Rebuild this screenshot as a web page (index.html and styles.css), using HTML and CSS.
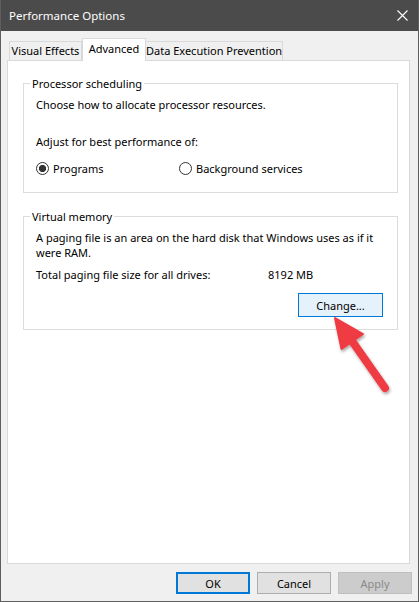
FILE: index.html
```html
<!DOCTYPE html>
<html lang="en">
<head>
<meta charset="utf-8">
<title>Performance Options</title>
<link rel="stylesheet" href="styles.css">
</head>
<body>
<div class="window">
  <div class="titlebar">
    <span class="title">Performance Options</span>
    <span class="close">
      <svg width="11" height="11" viewBox="0 0 11 11"><path d="M0.5 0.5 L10.5 10.5 M10.5 0.5 L0.5 10.5" stroke="#ffffff" stroke-width="1.1" fill="none"/></svg>
    </span>
  </div>
  <div class="body">
    <div class="tabs">
      <div class="tab tab-visual">Visual Effects</div>
      <div class="tab tab-adv active">Advanced</div>
      <div class="tab tab-dep">Data Execution Prevention</div>
    </div>
    <div class="panel">
      <fieldset class="group group-cpu">
        <legend>Processor scheduling</legend>
        <p class="line first">Choose how to allocate processor resources.</p>
        <p class="line adjust">Adjust for best performance of:</p>
        <div class="radios">
          <div class="radio"><span class="dot checked"></span>Programs</div>
          <div class="radio"><span class="dot"></span>Background services</div>
        </div>
      </fieldset>
      <fieldset class="group group-vm">
        <legend>Virtual memory</legend>
        <p class="line first nowrap">A paging file is an area on the hard disk that Windows uses as if it<br>were RAM.</p>
        <div class="total">
          <span>Total paging file size for all drives:</span>
          <span>8192 MB</span>
        </div>
        <div class="change-row">
          <div class="btn change">Change...</div>
        </div>
      </fieldset>
    </div>
    <div class="buttons">
      <div class="btn default">OK</div>
      <div class="btn">Cancel</div>
      <div class="btn disabled">Apply</div>
    </div>
  </div>
  <svg class="arrow" width="419" height="602" viewBox="0 0 419 602">
    <defs>
      <filter id="sh" x="-20%" y="-20%" width="140%" height="140%">
        <feDropShadow dx="1" dy="2" stdDeviation="1.5" flood-color="#000" flood-opacity="0.35"/>
      </filter>
    </defs>
    <g filter="url(#sh)" fill="#ef3a43" stroke="#ef3a43">
      <line x1="352" y1="341" x2="385" y2="388" stroke-width="8" stroke-linecap="round"/>
      <polygon points="335,318 363,334 341.5,349" stroke-width="2" stroke-linejoin="round"/>
    </g>
  </svg>
</div>
</body>
</html>
```

FILE: styles.css
```css
html, body {
  margin: 0;
  padding: 0;
  background: #ffffff;
}

.window {
  position: relative;
  width: 419px;
  height: 602px;
  box-sizing: border-box;
  background: #f0f0f0;
  border: 1px solid #5e5e5e;
  border-top: none;
  display: flex;
  flex-direction: column;
  font-family: "Noto Sans", "Open Sans", sans-serif;
  font-size: 11px;
  color: #000000;
}

.titlebar {
  height: 31px;
  flex: none;
  background: #4b4b4b;
  color: #ffffff;
  display: flex;
  align-items: center;
  padding-left: 8px;
  font-size: 11.5px;
}

.close {
  margin-left: auto;
  margin-right: 10px;
  display: flex;
}

.body {
  flex: 1;
  display: flex;
  flex-direction: column;
  padding: 7px 8px 0 6px;
}

.tabs {
  display: flex;
  height: 22px;
  padding-left: 2px;
  flex: none;
}

.tab {
  box-sizing: border-box;
  height: 19px;
  margin-top: 3px;
  border: 1px solid #d9d9d9;
  border-bottom: none;
  background: #f0f0f0;
  text-align: center;
  line-height: 18px;
  white-space: nowrap;
}

.tab + .tab {
  border-left: none;
}

.tab-visual { width: 73px; }
.tab-adv { width: 64px; }
.tab-dep { width: 137px; }

.tab.active {
  position: relative;
  z-index: 1;
  margin-top: 0;
  height: 23px;
  margin-bottom: -1px;
  background: #ffffff;
  border-left: 1px solid #d9d9d9;
  line-height: 19px;
}

.tab.active + .tab {
  border-left: none;
}

.panel {
  box-sizing: border-box;
  height: 504px;
  flex: none;
  border: 1px solid #d9d9d9;
  background: #ffffff;
  padding: 15px 11px 0 15px;
}

.group {
  margin: 0;
  border: 1px solid #dcdcdc;
  padding: 0 13px 16px 12px;
  min-width: 0;
}

.group legend {
  padding: 0 2px;
  margin-left: -6px;
  line-height: 15px;
}

.line {
  margin: 0;
  line-height: 15px;
}

.nowrap {
  white-space: nowrap;
}

.line.first {
  margin-top: 6px;
}

.line.adjust {
  margin-top: 22px;
}

.radios {
  margin-top: 12px;
  display: grid;
  grid-template-columns: 143px auto;
  line-height: 15px;
}

.radio {
  display: flex;
  align-items: center;
}

.dot {
  box-sizing: border-box;
  width: 13px;
  height: 13px;
  border: 1px solid #333333;
  border-radius: 50%;
  margin-right: 4px;
  background: #ffffff;
}

.dot.checked {
  background: radial-gradient(circle, #333333 0, #333333 3.3px, #ffffff 3.9px);
}

.group-vm {
  margin-top: 16px;
  padding-bottom: 12px;
}

.total {
  margin-top: 7px;
  display: grid;
  grid-template-columns: 232px auto;
  line-height: 15px;
}

.change-row {
  margin-top: 11px;
  display: flex;
  justify-content: flex-end;
  padding-right: 1px;
}

.btn {
  box-sizing: border-box;
  width: 74px;
  height: 22px;
  border: 1px solid #adadad;
  background: #e1e1e1;
  display: flex;
  align-items: center;
  justify-content: center;
}

.btn.change {
  width: 85px;
  height: 24px;
  background: #e5f1fb;
  border-color: #0078d7;
}

.buttons {
  margin-top: 8px;
  margin-right: -2px;
  display: flex;
  justify-content: flex-end;
  gap: 7px;
}

.btn.default {
  border: 2px solid #0078d7;
}

.btn.disabled {
  background: #cccccc;
  border-color: #bfbfbf;
  color: #8a8a8a;
}

.arrow {
  position: absolute;
  left: -1px;
  top: 0;
  pointer-events: none;
}
```
